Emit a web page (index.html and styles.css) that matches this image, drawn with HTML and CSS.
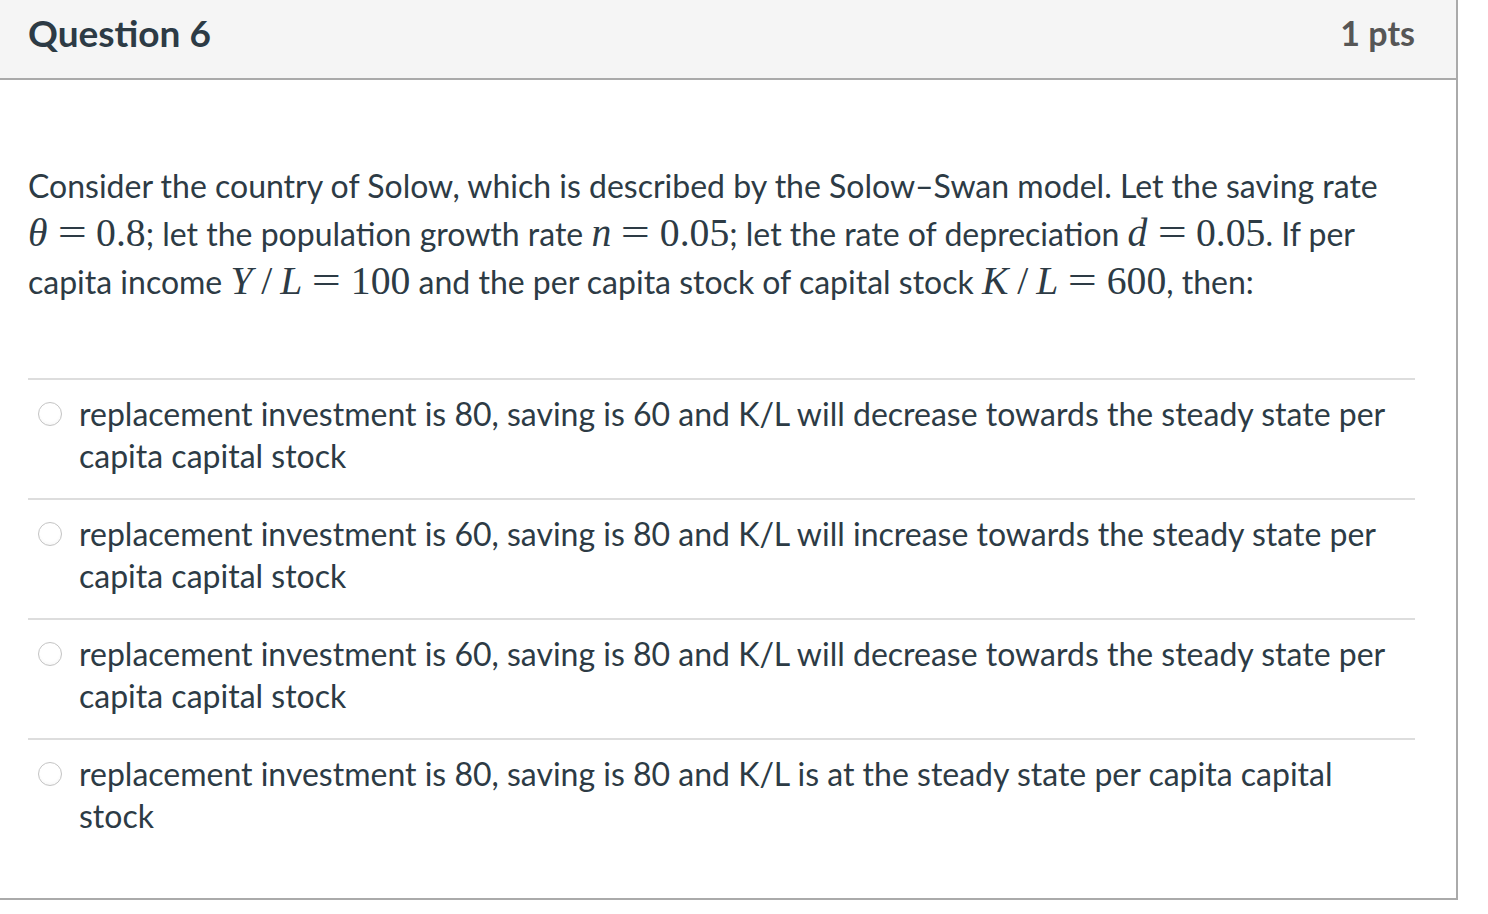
FILE: index.html
```html
<!DOCTYPE html>
<html>
<head>
<meta charset="utf-8">
<link rel="stylesheet" href="styles.css">
</head>
<body>
<div class="card">
  <div class="header">
    <span class="title">Question 6</span>
    <span class="pts">1 pts</span>
  </div>
  <div class="content">
    <p class="question">Consider the country of Solow, which is described by the Solow–Swan model. Let the saving rate <span class="m"><i>θ</i><span class="op">=</span>0.8</span>; let the population growth rate <span class="m"><i>n</i><span class="op">=</span>0.05</span>; let the rate of depreciation <span class="m"><i>d</i><span class="op">=</span>0.05</span>. If per capita income <span class="m"><i>Y</i><span class="sl">/</span><i>L</i><span class="op">=</span>100</span> and the per capita stock of capital stock <span class="m"><i>K</i><span class="sl">/</span><i>L</i><span class="op">=</span>600</span>, then:</p>
    <div class="answers">
      <div class="answer"><span class="radio"></span><span class="label">replacement investment is 80, saving is 60 and K/L will decrease towards the steady state per capita capital stock</span></div>
      <div class="answer"><span class="radio"></span><span class="label">replacement investment is 60, saving is 80 and K/L will increase towards the steady state per capita capital stock</span></div>
      <div class="answer"><span class="radio"></span><span class="label">replacement investment is 60, saving is 80 and K/L will decrease towards the steady state per capita capital stock</span></div>
      <div class="answer"><span class="radio"></span><span class="label">replacement investment is 80, saving is 80 and K/L is at the steady state per capita capital stock</span></div>
    </div>
  </div>
</div>
</body>
</html>
```
FILE: styles.css
```css
html, body {
  margin: 0;
  padding: 0;
  background: #fff;
}
body {
  font-family: Lato, "Open Sans", sans-serif;
  color: #2d3b45;
}
.card {
  width: 1456px;
  height: 898px;
  border-right: 2px solid #aaaaaa;
  border-bottom: 2px solid #aaaaaa;
  box-sizing: content-box;
}
.header {
  height: 78px;
  background: #f5f5f5;
  border-bottom: 2px solid #aaaaaa;
  display: flex;
  align-items: center;
  justify-content: space-between;
  padding: 0 41px 0 28px;
}
.title {
  font-size: 37px;
  font-weight: 700;
  color: #2d3b45;
  margin-top: -14px;
}
.pts {
  font-size: 34px;
  font-weight: 700;
  color: #565656;
  margin-top: -14px;
}
.content {
  padding: 0 41px 0 28px;
}
.question {
  margin: 0;
  padding-top: 82px;
  font-size: 32px;
  line-height: 48px;
}
.m {
  font-family: "Liberation Serif", "DejaVu Serif", serif;
  font-size: 1.24em;
  line-height: 1;
  white-space: nowrap;
}
.m i { font-style: italic; }
.op {
  display: inline-block;
  margin: 0 0.33em;
  transform: scaleX(1.3);
}
.sl {
  margin: 0 0.2em 0 0.22em;
}
.answers {
  margin-top: 72px;
}
.answer {
  border-top: 2px solid #dddddd;
  padding: 13px 0 21px 0;
  display: flex;
  align-items: flex-start;
  font-size: 32px;
  line-height: 42px;
}
.radio {
  flex: none;
  width: 22px;
  height: 22px;
  border: 1px solid #c4c4c4;
  border-radius: 50%;
  background: radial-gradient(circle at 50% 40%, #ffffff 55%, #f0f0f0 100%);
  margin: 9px 17px 0 10px;
}
.label {
  flex: 1;
}
```
